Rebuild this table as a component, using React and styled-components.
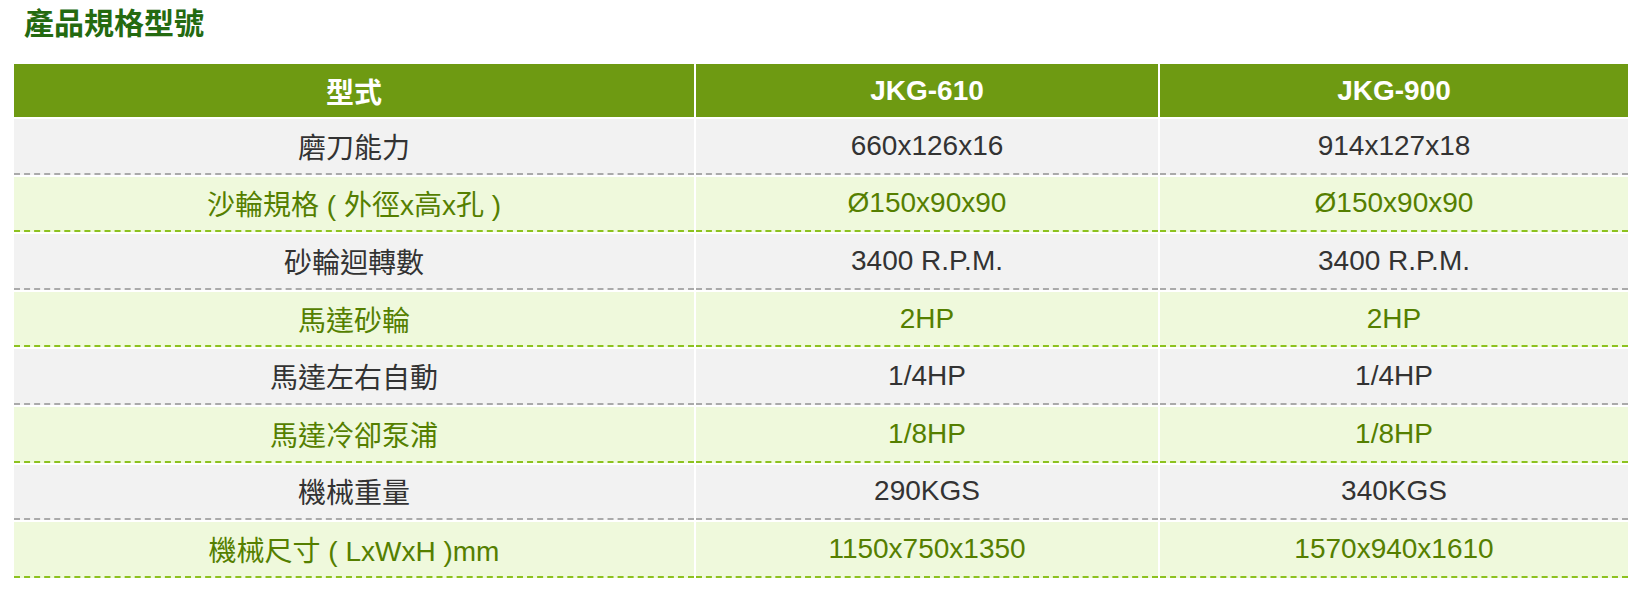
import React from "react";
import styled, { createGlobalStyle } from "styled-components";

const Global = createGlobalStyle`
  html, body { margin: 0; padding: 0; background: #fff; }
  body { font-family: "Liberation Sans", "Noto Sans CJK TC", sans-serif; }
`;

const Page = styled.div`
  padding: 6px 14px 0 14px;
  width: 1614px;
`;

const Title = styled.h2`
  margin: 0;
  padding-left: 10px;
  font-size: 30px;
  line-height: 36px;
  font-weight: 700;
  color: #246a10;
  font-family: "Liberation Sans", "Noto Sans CJK TC", sans-serif;
`;

const Grid = styled.div`
  margin-top: 22px;
  display: grid;
  grid-template-columns: 680px 462px 1fr;
  column-gap: 2px;
  row-gap: 2px;
`;

const HeadCell = styled.div`
  height: 53px;
  background: #6e9a12;
  color: #fff;
  font-weight: 700;
  font-size: 28px;
  display: flex;
  align-items: center;
  justify-content: center;
`;

const Cell = styled.div`
  box-sizing: border-box;
  height: 55.6px;
  display: flex;
  align-items: center;
  justify-content: center;
  font-size: 28px;
  background: ${(p) => (p.$green ? "#eff9dc" : "#f2f2f2")};
  color: ${(p) => (p.$green ? "#557f00" : "#333")};
  border-bottom: 2px dashed ${(p) => (p.$green ? "#8dc21f" : "#aaaaaa")};
`;

const heads = ["型式", "JKG-610", "JKG-900"];
const rows = [
  ["磨刀能力", "660x126x16", "914x127x18"],
  ["沙輪規格 ( 外徑x高x孔 )", "Ø150x90x90", "Ø150x90x90"],
  ["砂輪迴轉數", "3400 R.P.M.", "3400 R.P.M."],
  ["馬達砂輪", "2HP", "2HP"],
  ["馬達左右自動", "1/4HP", "1/4HP"],
  ["馬達冷卻泵浦", "1/8HP", "1/8HP"],
  ["機械重量", "290KGS", "340KGS"],
  ["機械尺寸 ( LxWxH )mm", "1150x750x1350", "1570x940x1610"],
];

export default function App() {
  return (
    <>
      <Global />
      <Page>
        <Title>產品規格型號</Title>
        <Grid>
          {heads.map((h) => (
            <HeadCell key={h}>{h}</HeadCell>
          ))}
          {rows.map((r, i) =>
            r.map((c, j) => (
              <Cell key={`${i}-${j}`} $green={i % 2 === 1}>
                {c}
              </Cell>
            ))
          )}
        </Grid>
      </Page>
    </>
  );
}
